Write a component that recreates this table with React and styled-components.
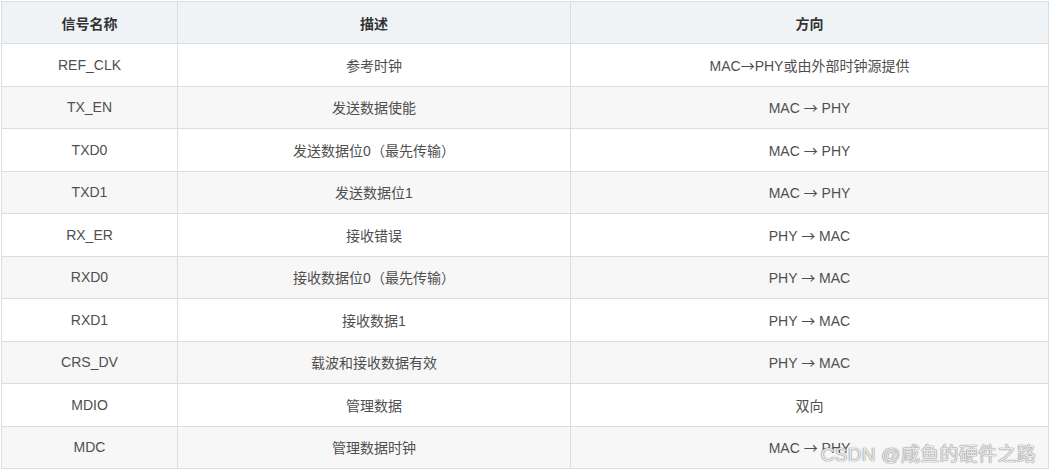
import React from 'react'
import styled, { createGlobalStyle } from 'styled-components'

const GlobalStyle = createGlobalStyle`
    html, body {
        margin: 0;
        background: #fff;
    }
`

const Page = styled.div`
    position: relative;
    width: 1051px;
    height: 473px;
    padding: 1px 0 0 1px;
    box-sizing: border-box;
    font-family: "Liberation Sans", "Noto Sans CJK SC", sans-serif;
`

const Table = styled.table`
    width: 1048px;
    border-collapse: collapse;
    table-layout: fixed;
    font-size: 14px;
    color: #4f4f4f;
`

const HeadCell = styled.th`
    height: 41px;
    padding: 0;
    border: 1px solid #dddddd;
    background: #eff3f5;
    color: #333;
    font-weight: bold;
    text-align: center;
`

const Row = styled.tr`
    background: ${props => props.striped ? '#f7f7f7' : '#fff'};
`

const Cell = styled.td`
    height: 41.5px;
    padding: 0;
    border: 1px solid #dddddd;
    text-align: center;
    white-space: nowrap;
`

const Arrow = styled.span`
    font-family: "Noto Sans CJK SC", sans-serif;
`

const Watermark = styled.div`
    position: absolute;
    right: 15px;
    bottom: 7px;
    font-size: 19px;
    color: rgba(255, 255, 255, 0.85);
    text-shadow: 0 0 1px #777, 0 0 1px #777;
    letter-spacing: 0.3px;
`

const rows = [
    ['REF_CLK', '参考时钟', 'MAC→PHY或由外部时钟源提供'],
    ['TX_EN', '发送数据使能', 'MAC → PHY'],
    ['TXD0', '发送数据位0（最先传输）', 'MAC → PHY'],
    ['TXD1', '发送数据位1', 'MAC → PHY'],
    ['RX_ER', '接收错误', 'PHY → MAC'],
    ['RXD0', '接收数据位0（最先传输）', 'PHY → MAC'],
    ['RXD1', '接收数据1', 'PHY → MAC'],
    ['CRS_DV', '载波和接收数据有效', 'PHY → MAC'],
    ['MDIO', '管理数据', '双向'],
    ['MDC', '管理数据时钟', 'MAC → PHY'],
]

// split on the arrow so it can use a font that draws it full width
const withArrow = text => text.split('→').flatMap((part, i) =>
    i === 0 ? [part] : [<Arrow key={i}>→</Arrow>, part])

export default function App() {
    return (
        <Page>
            <GlobalStyle />
            <Table>
                <colgroup>
                    <col style={{ width: 176 }} />
                    <col style={{ width: 393 }} />
                    <col />
                </colgroup>
                <thead>
                    <tr>
                        <HeadCell>信号名称</HeadCell>
                        <HeadCell>描述</HeadCell>
                        <HeadCell>方向</HeadCell>
                    </tr>
                </thead>
                <tbody>
                    {rows.map((r, i) => (
                        <Row key={r[0]} striped={i % 2 === 1}>
                            <Cell>{r[0]}</Cell>
                            <Cell>{r[1]}</Cell>
                            <Cell>{withArrow(r[2])}</Cell>
                        </Row>
                    ))}
                </tbody>
            </Table>
            <Watermark>CSDN @咸鱼的硬件之路</Watermark>
        </Page>
    )
}
